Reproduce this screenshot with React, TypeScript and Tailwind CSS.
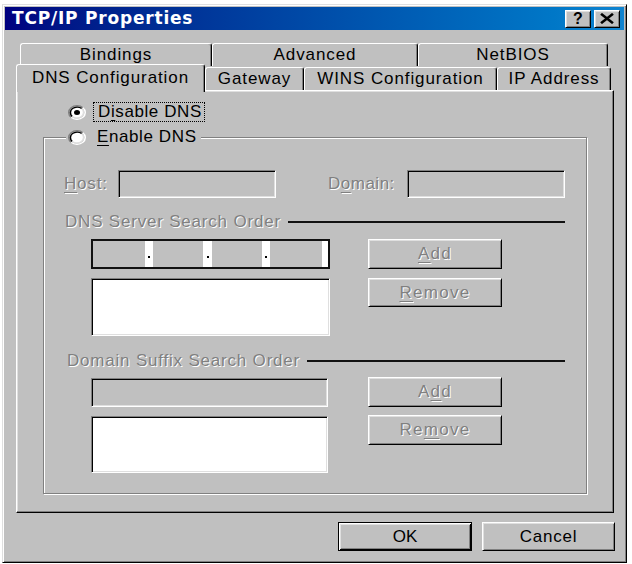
import React from "react";

const raised =
    "border border-t-white border-l-white border-r-black border-b-black shadow-[inset_1px_1px_0_#dfdfdf,inset_-1px_-1px_0_#808080]";
const sunken =
    "border border-t-[#808080] border-l-[#808080] border-r-white border-b-white shadow-[inset_1px_1px_0_#000,inset_-1px_-1px_0_#dfdfdf]";
const grayed = "text-[#808080] [text-shadow:1px_1px_0_#fff]";

// text with one underlined access key
const Accel: React.FC<{ text: string; at: number }> = ({ text, at }) => (
    <>
        {text.slice(0, at)}
        <span className="underline underline-offset-[3px]">{text[at]}</span>
        {text.slice(at + 1)}
    </>
);

const Radio: React.FC<{ checked?: boolean }> = ({ checked }) => (
    <svg width="18" height="15" viewBox="0 0 12 12" preserveAspectRatio="none" className="shrink-0">
        <circle cx="6" cy="6" r="4.5" fill="#fff" />
        <path d="M2.11 9.89 A5.5 5.5 0 0 1 9.89 2.11" fill="none" stroke="#808080" strokeWidth="1" />
        <path d="M9.89 2.11 A5.5 5.5 0 0 1 2.11 9.89" fill="none" stroke="#fff" strokeWidth="1" />
        <path d="M2.82 9.18 A4.5 4.5 0 0 1 9.18 2.82" fill="none" stroke="#000" strokeWidth="1" />
        <path d="M9.18 2.82 A4.5 4.5 0 0 1 2.82 9.18" fill="none" stroke="#dfdfdf" strokeWidth="1" />
        {checked && <circle cx="6" cy="6" r="2" fill="#000" />}
    </svg>
);

const Tab: React.FC<{ w: string; children: React.ReactNode; className?: string }> = ({ w, children, className }) => (
    <div
        className={`${w} ${className ?? ""} flex items-center justify-center rounded-t-[3px] border-t border-l border-r border-t-white border-l-white border-r-black bg-[#c0c0c0] tracking-[0.9px] shadow-[inset_-1px_0_0_#808080]`}
    >
        {children}
    </div>
);

const GrayButton: React.FC<{ h: string; children: React.ReactNode }> = ({ h, children }) => (
    <div className={`${raised} ${h} ${grayed} flex items-center justify-center bg-[#c0c0c0] tracking-[1.3px]`}>
        {children}
    </div>
);

const Heading: React.FC<{ text: string; pl: string }> = ({ text, pl }) => (
    <div className={`flex h-[20px] items-center pr-[21px] ${pl}`}>
        <span className={`${grayed} tracking-[0.8px]`}>{text}</span>
        <div className="ml-[7px] h-[2px] flex-1 bg-[#111]" />
    </div>
);

const IpField: React.FC = () => {
    const dot = (w: string) => (
        <div className={`${w} flex flex-col items-center justify-end bg-white pb-[9px]`}>
            <div className="h-[2px] w-[2px] bg-black" />
        </div>
    );
    return (
        <div className="flex h-[30px] border-2 border-[#111] bg-white">
            <div className="w-[52px] bg-[#c0c0c0]" />
            {dot("w-[8px]")}
            <div className="w-[50px] bg-[#c0c0c0]" />
            {dot("w-[9px]")}
            <div className="w-[50px] bg-[#c0c0c0]" />
            {dot("w-[8px]")}
            <div className="w-[52px] bg-[#c0c0c0]" />
            <div className="w-[6px] bg-white" />
        </div>
    );
};

export default function App() {
    return (
        <div className="h-[564px] w-[632px] overflow-hidden bg-white pl-[2px] pt-[4px] font-['Liberation_Sans',Arial,sans-serif] text-[17px] text-black">
            <div className="h-[559px] w-[625px] border border-t-[#dfdfdf] border-l-[#dfdfdf] border-r-black border-b-black bg-[#c0c0c0] p-[2px] shadow-[inset_1px_1px_0_#fff,inset_-1px_-1px_0_#808080]">
                {/* title bar */}
                <div className="flex h-[23px] items-center bg-linear-to-r from-[#000080] to-[#1084d0] pl-[7px] pr-[4px]">
                    <span className="font-['DejaVu_Sans',sans-serif] text-[17px] font-bold tracking-[0.8px] text-white">
                        TCP/IP Properties
                    </span>
                    <div className="ml-auto flex gap-[3px]">
                        <div className={`${raised} flex h-[18px] w-[26px] items-center justify-center bg-[#c0c0c0] pt-[1px] text-[16px] font-bold leading-none`}>
                            ?
                        </div>
                        <div className={`${raised} flex h-[18px] w-[26px] items-center justify-center bg-[#c0c0c0]`}>
                            <svg width="14" height="11" viewBox="0 0 8 7" preserveAspectRatio="none">
                                <path d="M0.6 0.5 L7.4 6.5 M7.4 0.5 L0.6 6.5" stroke="#000" strokeWidth="1.5" fill="none" />
                            </svg>
                        </div>
                    </div>
                </div>

                <div className="pl-[11px] pr-[10px] pt-[13px]">
                    {/* tabs */}
                    <div className="flex h-[23px] pl-[4px]">
                        <Tab w="w-[192px]">Bindings</Tab>
                        <Tab w="w-[206px]">Advanced</Tab>
                        <Tab w="w-[190px]">NetBIOS</Tab>
                    </div>
                    <div className="flex h-[24px]">
                        <Tab w="w-[189px]" className="relative z-10 -mt-[2px] h-[28px] pb-[2px]">
                            DNS Configuration
                        </Tab>
                        <Tab w="w-[99px]" className="mt-[1px] h-[23px] pb-[1px]">
                            Gateway
                        </Tab>
                        <Tab w="w-[193px]" className="mt-[1px] h-[23px] pb-[1px]">
                            WINS Configuration
                        </Tab>
                        <Tab w="w-[114px]" className="mt-[1px] h-[23px] pb-[1px]">
                            IP Address
                        </Tab>
                    </div>

                    {/* tab page */}
                    <div className="flex h-[423px] w-[598px] flex-col border border-t-white border-l-white border-r-black border-b-black bg-[#c0c0c0] shadow-[inset_-1px_-1px_0_#808080,inset_1px_1px_0_#dfdfdf]">
                        <div className="ml-[51px] mt-[11px] flex h-[20px] items-center">
                            <Radio checked />
                            <span className="ml-[7px] flex h-[20px] items-center border border-dotted border-black pl-[4px] pr-[2px] tracking-[0.6px]">
                                <Accel text="Disable DNS" at={1} />
                            </span>
                        </div>

                        <fieldset className="ml-[26px] mt-[5px] w-[544px] border border-[#808080] pb-[20px] shadow-[1px_1px_0_#fff,inset_1px_1px_0_#fff]">
                            <legend className="ml-[22px] bg-[#c0c0c0] pl-[2px] pr-[4px]">
                                <span className="flex h-[20px] items-center">
                                    <Radio />
                                    <span className="ml-[11px] tracking-[0.6px]">
                                        <Accel text="Enable DNS" at={0} />
                                    </span>
                                </span>
                            </legend>

                            <div className="mt-[23px] flex items-center pl-[20px]">
                                <span className={`${grayed} w-[54px] tracking-[0.8px]`}>
                                    <Accel text="Host:" at={0} />
                                </span>
                                <div className={`${sunken} h-[28px] w-[158px] bg-[#c0c0c0]`} />
                                <span className={`${grayed} ml-[52px] w-[79px] tracking-[0.5px]`}>
                                    <Accel text="Domain:" at={1} />
                                </span>
                                <div className={`${sunken} h-[28px] w-[158px] bg-[#c0c0c0]`} />
                            </div>

                            <div className="mt-[14px]">
                                <Heading text="DNS Server Search Order" pl="pl-[21px]" />
                            </div>

                            <div className="mt-[7px] flex pl-[47px]">
                                <div className="flex w-[239px] flex-col gap-[9px]">
                                    <IpField />
                                    <div className={`${sunken} h-[58px] bg-white`} />
                                </div>
                                <div className="ml-[38px] flex w-[134px] flex-col gap-[9px]">
                                    <GrayButton h="h-[30px]">
                                        <Accel text="Add" at={0} />
                                    </GrayButton>
                                    <GrayButton h="h-[29px]">
                                        <Accel text="Remove" at={0} />
                                    </GrayButton>
                                </div>
                            </div>

                            <div className="mt-[15px]">
                                <Heading text="Domain Suffix Search Order" pl="pl-[23px]" />
                            </div>

                            <div className="mt-[7px] flex pl-[47px]">
                                <div className="flex w-[237px] flex-col gap-[9px]">
                                    <div className={`${sunken} h-[29px] bg-[#c0c0c0]`} />
                                    <div className={`${sunken} h-[57px] bg-white`} />
                                </div>
                                <div className="-mt-[1px] ml-[40px] flex w-[134px] flex-col gap-[8px]">
                                    <GrayButton h="h-[30px]">
                                        <Accel text="Add" at={1} />
                                    </GrayButton>
                                    <GrayButton h="h-[30px]">
                                        <Accel text="Remove" at={2} />
                                    </GrayButton>
                                </div>
                            </div>
                        </fieldset>
                    </div>

                    {/* dialog buttons */}
                    <div className="-mr-[1px] mt-[9px] flex justify-end gap-[10px]">
                        <div className="flex h-[29px] w-[134px] items-center justify-center border border-black bg-[#c0c0c0] shadow-[inset_1px_1px_0_#fff,inset_-1px_-1px_0_#000,inset_2px_2px_0_#dfdfdf,inset_-2px_-2px_0_#808080]">
                            OK
                        </div>
                        <div className={`${raised} flex h-[29px] w-[133px] items-center justify-center bg-[#c0c0c0] tracking-[0.8px]`}>
                            Cancel
                        </div>
                    </div>
                </div>
            </div>
        </div>
    );
}
